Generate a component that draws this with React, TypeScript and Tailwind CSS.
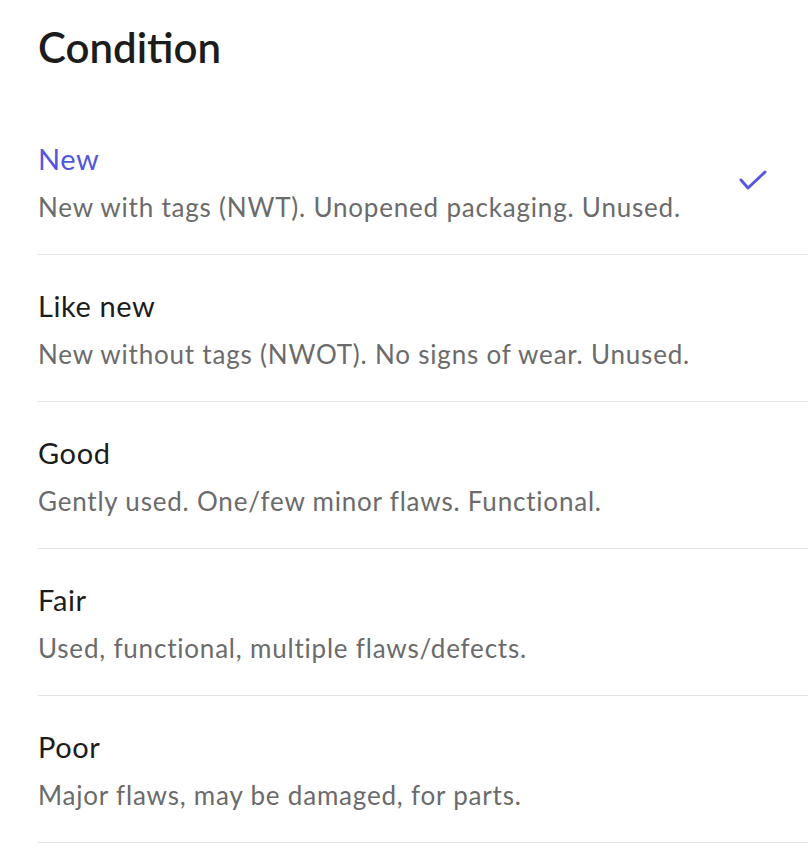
import type { FC } from "react"

type Condition = {
    name: string
    description: string
}

const conditions: Condition[] = [
    { name: "New", description: "New with tags (NWT). Unopened packaging. Unused." },
    { name: "Like new", description: "New without tags (NWOT). No signs of wear. Unused." },
    { name: "Good", description: "Gently used. One/few minor flaws. Functional." },
    { name: "Fair", description: "Used, functional, multiple flaws/defects." },
    { name: "Poor", description: "Major flaws, may be damaged, for parts." },
]

const CheckIcon: FC = () => (
    <svg width="30" height="22" viewBox="0 0 30 22" fill="none" className="-mt-[6px]">
        <polyline
            points="3,10 10,18 27,2"
            stroke="#5759dc"
            strokeWidth="3"
            strokeLinecap="round"
            strokeLinejoin="round"
        />
    </svg>
)

const ConditionRow: FC<{ item: Condition; selected: boolean }> = ({ item, selected }) => {
    return (
        <div className="flex items-center h-[147px] border-b border-[#e3e3e3] pt-[6px] pr-[40px]">
            <div className="flex-1 flex flex-col gap-[16px]">
                <span
                    className={`text-[29px] leading-[34px] tracking-[0.6px] -mt-[4px] ${selected ? "text-[#5457dc]" : "text-[#1c1c1c]"}`}
                >
                    {item.name}
                </span>
                <span className="text-[26px] leading-[30px] tracking-[0.8px] text-[#6b6b6b]">{item.description}</span>
            </div>
            {selected && <CheckIcon />}
        </div>
    )
}

export default function App() {
    return (
        <div className="w-[808px] h-[850px] bg-white overflow-hidden" style={{ fontFamily: "Lato, 'Noto Sans', sans-serif" }}>
            <div className="pl-[38px]">
                <h1 className="pt-[22px] pb-[36px] text-[42px] leading-[50px] font-semibold text-[#1c1c1c]">Condition</h1>
                <div>
                    {conditions.map((c, i) => (
                        <ConditionRow key={c.name} item={c} selected={i === 0} />
                    ))}
                </div>
            </div>
        </div>
    )
}
